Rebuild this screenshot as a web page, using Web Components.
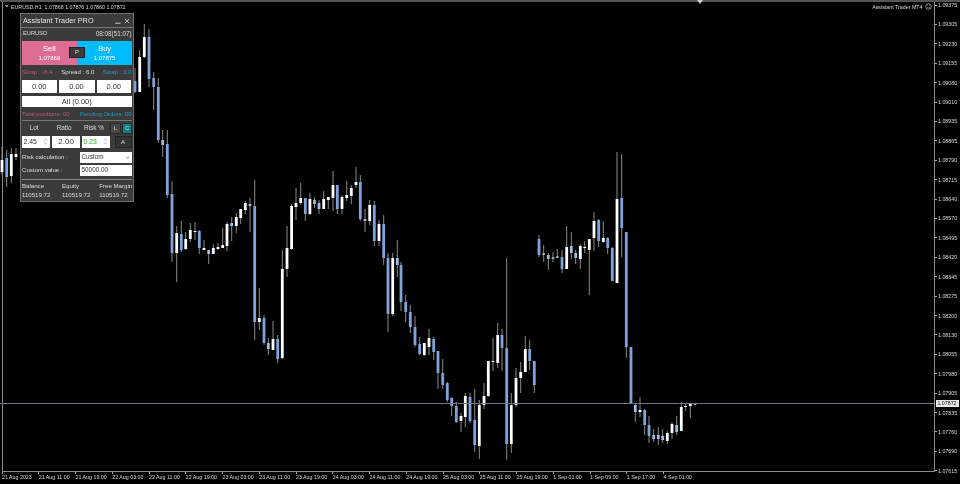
<!DOCTYPE html>
<html>
<head>
<meta charset="utf-8">
<title>Assistant Trader</title>
<style>
  html, body { margin: 0; background: #000; font-family: "Liberation Sans", Arial, sans-serif; }
</style>
</head>
<body>
<chart-view>
  <trader-panel></trader-panel>
</chart-view>

<script>
// x, wick top, body top, body bottom, wick bottom, w = up / b = down (page pixels)
const candles = [
  [2,147,160,172,175,'w'],[6.7,150,158,177,187,'b'],[11.3,148,154,176,183,'w'],[16,148,154,157,160,'w'],
  [135,68,81,92,93,'b'],[139.7,50,57,92,92,'w'],[144.3,24,37,57,58,'w'],[149,29,37,79,87,'b'],
  [153.7,72,78,87,110,'b'],[158.3,78,87,140,143,'b'],[162.7,130,140,145,157,'b'],[167.3,130,144,195,198,'b'],
  [172,181,194,253,262,'b'],[176.7,226,233,253,282,'w'],[181.3,221,234,250,252,'b'],[185.7,232,239,249,250,'w'],
  [190.3,223,230,239,242,'w'],[195,222,231,232,240,'w'],[199.3,230,231,248,254,'b'],[204,240,248,250,250,'w'],
  [208.7,250,250,254,264,'b'],[213.3,244,248,254,254,'w'],[218,243,247,249,250,'w'],[222.7,228,245,248,248,'w'],
  [227,222,224,246,251,'w'],[231.7,217,223,226,241,'b'],[236.3,213,217,226,233,'w'],[240.7,209,209,218,224,'w'],
  [245.3,201,203,210,214,'w'],[250,198,204,206,232,'b'],[254.7,180,206,322,340,'b'],[259.3,288,318,322,330,'w'],
  [264,315,318,343,345,'b'],[268.3,338,343,349,355,'b'],[273,321,339,350,350,'w'],[277.7,335,339,359,363,'b'],
  [282.3,250,269,358,359,'w'],[287,226,248,269,277,'w'],[291.6,204,206,249,250,'w'],[296,188,203,207,220,'w'],
  [300.7,183,198,203,205,'w'],[305.3,198,198,214,221,'b'],[309.9,193,199,214,215,'w'],[314.5,197,200,204,208,'b'],
  [319,200,203,209,214,'b'],[323.7,191,199,209,209,'w'],[328.3,197,197,200,209,'w'],[333,171,185,198,211,'w'],
  [337.3,185,185,209,214,'b'],[342,195,197,209,214,'w'],[346.7,181,195,198,201,'w'],[351.3,185,188,196,204,'w'],
  [356,167,182,185,188,'w'],[360.3,175,182,219,221,'b'],[365,209,219,221,232,'b'],[369.7,200,205,221,225,'w'],
  [374.3,201,205,241,246,'b'],[379,220,224,241,246,'w'],[383.7,215,224,258,265,'b'],[388,253,258,314,332,'b'],
  [392.7,253,258,314,316,'w'],[397.3,240,258,265,277,'b'],[401,262,265,302,311,'b'],[405.7,295,302,312,322,'b'],
  [410.3,305,312,327,333,'b'],[415,316,327,345,347,'b'],[419.7,337,344,354,355,'b'],[424.3,343,343,355,356,'w'],
  [429,329,338,347,355,'w'],[433.7,337,339,352,360,'b'],[438,351,351,373,389,'b'],[442.7,359,373,385,389,'b'],
  [447.3,382,383,400,402,'b'],[451.7,397,398,406,416,'b'],[456.3,402,406,422,423,'b'],[461,413,416,421,432,'w'],
  [465.3,393,396,417,427,'w'],[470,393,397,421,423,'b'],[474.7,389,420,445,452,'b'],[479.3,400,405,446,459,'w'],
  [484,383,396,405,409,'w'],[488.3,361,361,396,397,'w'],[493,338,361,362,371,'w'],[497.7,323,335,363,368,'w'],
  [502,329,335,348,371,'b'],[506.7,258,348,444,460,'b'],[511.3,393,405,444,453,'w'],[516,368,378,405,407,'w'],
  [520.7,362,372,378,393,'w'],[525.3,336,349,372,372,'w'],[529.7,340,349,361,370,'b'],[534.3,361,361,385,393,'b'],
  [539,235,239,255,257,'b'],[543.7,245,253.5,254.5,262,'w'],[548.3,253,255,259,270,'b'],[553,252,257.5,258.5,262,'w'],
  [557.3,249,256.5,257.5,258,'w'],[562,250,257,269,273,'b'],[566.7,226,247,269,269,'w'],[571.3,232,246,253,259,'b'],
  [575.7,250,253,258,264,'b'],[580.3,244,246,259,269,'w'],[584.7,241,247,248,253,'w'],[589.3,239,239,250,295,'w'],
  [594,212,221,238,251,'w'],[598.7,219,220,241,247,'b'],[603.3,221,238,242,243,'w'],[607.7,237,238,248,254,'b'],
  [612.3,247,248,281,281,'b'],[617,152,199,283,283,'w'],[621.7,154,198,228,257,'b'],[626.3,232,232,347,358,'b'],
  [631,347,347,404,404,'b'],[635.3,404,405,412,422,'b'],[640,397,410,412,417,'w'],[644.7,409,410,425,435,'b'],
  [649,416,425,436,443,'b'],[653.7,429,435,439,442,'b'],[658.3,427,435,439,445,'b'],[662.7,429,436,440,443,'b'],
  [667.3,431,433,441,444,'w'],[672,422,424,433,439,'w'],[676.7,416,425,432,435,'b'],[681.3,402,407,431,431,'w'],
  [685.7,403,406,407,411,'w'],[690.3,404,404,406,418,'w'],[695,403,403,404.5,405,'w']
]

const priceLabels = ['1.09375', '1.09305', '1.09230', '1.09155', '1.09080', '1.09010', '1.08935', '1.08865',
  '1.08790', '1.08715', '1.08640', '1.08570', '1.08495', '1.08420', '1.08345', '1.08275', '1.08200', '1.08130',
  '1.08055', '1.07980', '1.07905', '1.07835', '1.07760', '1.07690', '1.07615']

const timeLabels = ['21 Aug 2023', '21 Aug 11:00', '21 Aug 19:00', '22 Aug 03:00', '22 Aug 11:00', '22 Aug 19:00',
  '23 Aug 03:00', '23 Aug 11:00', '23 Aug 19:00', '24 Aug 03:00', '24 Aug 11:00', '24 Aug 19:00', '25 Aug 03:00',
  '25 Aug 11:00', '25 Aug 19:00', '1 Sep 01:00', '1 Sep 09:00', '1 Sep 17:00', '4 Sep 01:00']

const candleMarkup = candles.map(([x, wt, bt, bb, wb, kind]) => {
  const fill = kind === 'w' ? '#fff' : (bb - bt < 8 ? '#a0bbe6' : '#7fa3dc')
  return `<path d="M${x} ${wt}V${wb}" stroke="#8a8a8a" stroke-width="1"/>` +
    `<rect x="${x - 1.4}" y="${bt}" width="2.8" height="${Math.max(bb - bt, 1)}" fill="${fill}"/>`
}).join('')

const chartTemplate = document.createElement('template')
chartTemplate.innerHTML = `
  <style>
    :host {
      display: grid;
      position: relative;
      width: 960px;
      height: 484px;
      overflow: hidden;
      background: #000;
      color: #d8d8d8;
      font: 5.3px/6px "Liberation Sans", Arial, sans-serif;
      grid-template-columns: 935px 25px;
      grid-template-rows: 2px 470px 12px;
      filter: blur(.3px);
    }
    .top { grid-column: 1 / 3; grid-row: 1; background: #555; position: relative; }
    .top svg { position: absolute; left: 697px; top: 0; }
    .plot {
      grid-column: 1;
      grid-row: 2;
      position: relative;
      margin-left: 1.5px;
      border-left: 1px solid #8c8c8c;
      border-right: 1px solid #8c8c8c;
      border-bottom: 1px solid #8c8c8c;
    }
    .plot > svg { position: absolute; left: -2.5px; top: 0; }
    .head {
      position: absolute;
      inset: 0 0 auto 0;
      padding: 1px 2.5px 0 2px;
      display: flex;
      align-items: center;
      justify-content: space-between;
    }
    .head > span { display: flex; align-items: center; gap: 2px; }
    .head > span:first-child { gap: 3px; }
    .head .name { white-space: pre; }
    .prices {
      grid-column: 2;
      grid-row: 2 / 4;
      height: 472px;
      display: flex;
      flex-direction: column;
      justify-content: space-between;
      position: relative;
    }
    .prices div { display: flex; align-items: center; gap: 1px; height: 6px; }
    .prices i { width: 2px; height: 1px; background: #aaa; }
    .prices .tag {
      position: absolute;
      left: 0.5px;
      top: 398px;
      width: 23px;
      height: 6.5px;
      line-height: 6.5px;
      background: #e8e8e8;
      color: #111;
      justify-content: center;
    }
    .times { grid-column: 1; grid-row: 3; display: flex; padding-left: 1.5px; }
    .times div {
      flex: 0 0 36.75px;
      height: 12px;
      line-height: 11px;
      padding-left: .5px;
      box-sizing: border-box;
      white-space: nowrap;
      position: relative;
    }
    .times i { position: absolute; left: 0; top: 0; width: 1px; height: 2px; background: #aaa; }
    .bid { position: absolute; left: -2.5px; right: 0; top: 401px; height: 1px; background: #6f7480; }
  </style>
  <div class="top"><svg width="6" height="4" viewBox="0 0 6 4"><path d="M0 0H6L3 4Z" fill="#c8c8c8"/></svg></div>
  <div class="plot">
    <svg width="934" height="470" viewBox="0 2 934 470">${candleMarkup}</svg>
    <div class="bid"></div>
    <div class="head">
      <span><svg width="3.5" height="2.5" viewBox="0 0 5 3"><path d="M0 0H5L2.5 3Z" fill="#ddd"/></svg><span class="name">EURUSD,H1  1.07868 1.07876 1.07860 1.07872</span></span>
      <span>Assistant Trader MT4<svg width="7" height="7" viewBox="0 0 7 7"><circle cx="3.5" cy="3.5" r="2.8" fill="none" stroke="#aaa" stroke-width=".8"/><path d="M2 4.4Q3.5 5.6 5 4.4M2.5 2.2V3M4.5 2.2V3" fill="none" stroke="#aaa" stroke-width=".6"/></svg></span>
    </div>
    <slot></slot>
  </div>
  <div class="prices">
    ${priceLabels.map(p => `<div><i></i><span>${p}</span></div>`).join('')}
    <div class="tag">1.07872</div>
  </div>
  <div class="times">
    ${timeLabels.map(t => `<div><i></i>${t}</div>`).join('')}
  </div>
`

class ChartView extends HTMLElement {
  constructor () {
    super()
    this.attachShadow({ mode: 'open' })
    this.shadowRoot.appendChild(chartTemplate.content.cloneNode(true))
  }
}

const fieldTemplate = document.createElement('template')
fieldTemplate.innerHTML = `
  <style>
    :host {
      display: flex;
      align-items: center;
      justify-content: center;
      box-sizing: border-box;
      height: 100%;
      background: #fff;
      color: #333;
      font-size: 7.5px;
      position: relative;
    }
    :host([align=left]) { justify-content: flex-start; padding-left: 2px; font-size: 6.4px; }
    :host([spin]) { justify-content: flex-start; padding: 1px 0 0 1.5px; font-size: 6.9px; }
    :host([large]) { font-size: 8px; }
    svg { position: absolute; right: 2px; top: 50%; margin-top: -3.5px; display: none; }
    :host([spin]) .spin, :host([caret]) .caret { display: block; }
  </style>
  <slot></slot>
  <svg class="spin" width="5" height="7" viewBox="0 0 5 7"><path d="M.8 2.6 2.5 1 4.2 2.6M.8 4.4 2.5 6 4.2 4.4" fill="none" stroke="#999" stroke-width=".7"/></svg>
  <svg class="caret" width="5" height="7" viewBox="0 0 5 7"><path d="M.8 2.8 2.5 4.4 4.2 2.8" fill="none" stroke="#888" stroke-width=".9"/></svg>
`

class NumField extends HTMLElement {
  constructor () {
    super()
    this.attachShadow({ mode: 'open' })
    this.shadowRoot.appendChild(fieldTemplate.content.cloneNode(true))
  }
}

const panelTemplate = document.createElement('template')
panelTemplate.innerHTML = `
  <style>
    :host {
      display: block;
      position: absolute;
      left: 17px;
      top: 11px;
      width: 114.5px;
      height: 188.5px;
      box-sizing: border-box;
      background: #3b3b3b;
      border: 1px solid #6e6e6e;
      color: #dcdcdc;
      font: 6.1px/1 "Liberation Sans", Arial, sans-serif;
    }
    .title {
      height: 13px;
      padding: 0 3px 0 2.5px;
      display: flex;
      align-items: center;
      justify-content: space-between;
      font-size: 7.3px;
      color: #e4e4e4;
    }
    .title span { display: flex; gap: 3px; align-items: center; }
    .body { padding: 0 1.5px; display: flex; flex-direction: column; }
    hr { border: 0; height: 1px; margin: 0; background: #777; }
    .info { height: 11.5px; display: flex; align-items: center; justify-content: space-between; padding: 0 0 0 1px; font-size: 6.3px; }
    .info b { font-weight: 400; font-size: 5.7px; }
    .deal { display: grid; grid-template-columns: 1fr 1fr; height: 24.5px; margin-top: 1px; position: relative; color: #fff; }
    .deal div { display: flex; flex-direction: column; align-items: center; justify-content: center; gap: 2.5px; font-size: 7.5px; }
    .deal small { font-size: 6px; }
    .sell { background: #dc6e96; }
    .buy { background: #00bcff; padding-left: 1px; }
    .deal .pend {
      position: absolute;
      left: 47px;
      top: 6.5px;
      width: 16px;
      height: 10.5px;
      padding: 0;
      background: #3a3a3a;
      border: .5px solid #222;
      box-sizing: border-box;
      font-size: 6px;
      color: #ddd;
    }
    .swap { height: 15px; display: flex; align-items: center; justify-content: space-between; font-size: 6.1px; }
    .pink { color: #c05478; }
    .blue { color: #1c9cc8; }
    .amounts { display: grid; grid-template-columns: 34.5px 36px 34.5px; gap: 2px; height: 13px; }
    .all { height: 11px; margin-top: 3px; }
    .totals {
      height: 12.5px;
      box-sizing: border-box;
      padding-bottom: 1.5px;
      display: flex;
      align-items: flex-end;
      justify-content: space-between;
      font-size: 5.95px;
    }
    .sep { height: 1.5px; background: #777; }
    .labels { display: grid; grid-template-columns: 28.3px 1.7px 28.3px 1.7px 27.9px 1fr; height: 15px; align-items: center; text-align: center; font-size: 6.4px; }
    .labels span { padding-right: 4px; }
    .keys { grid-column: 6; display: flex; justify-content: flex-end; gap: 1.5px; margin-top: 0; }
    .key {
      width: 11px;
      height: 10.5px;
      display: flex;
      align-items: center;
      justify-content: center;
      box-sizing: border-box;
      background: #474747;
      border: .5px solid #2b2b2b;
      font-size: 5.6px;
    }
    .key.on { background: #0d7f86; color: #b4e2e2; width: 10px; }
    .inputs { display: grid; grid-template-columns: 28.3px 28.3px 27.9px 1fr; gap: 1.7px; height: 11.5px; }
    .inputs .a {
      margin-left: 3px;
      background: #333;
      border: .5px solid #252525;
      box-sizing: border-box;
      display: flex;
      align-items: center;
      justify-content: center;
      font-size: 6px;
    }
    .green { color: #35a835; }
    .form { display: grid; grid-template-columns: 1fr 52px; row-gap: 2px; margin-top: 4px; grid-auto-rows: 11px; align-items: center; }
    .form num-field { grid-column: 2; }
    .sep2 { margin-top: 3px; height: 1px; background: #888; }
    .stats { display: grid; grid-template-columns: 40px 37.3px 1fr; padding-top: 3px; row-gap: 3.5px; white-space: nowrap; }
  </style>
  <div class="title">
    Assistant Trader PRO
    <span>
      <svg width="6" height="6" viewBox="0 0 6 6"><path d="M0 5.2H5.6" stroke="#c8c8c8" stroke-width="1"/></svg>
      <svg width="6" height="6" viewBox="0 0 6 6"><path d="M.8 .8 5.2 5.2M5.2 .8 .8 5.2" stroke="#d8d8d8" stroke-width=".8"/></svg>
    </span>
  </div>
  <hr>
  <div class="body">
    <div class="info"><b>EURUSD</b><span>08:08(51:07)</span></div>
    <div class="deal">
      <div class="sell">Sell<small>1.07869</small></div>
      <div class="buy">Buy<small>1.07875</small></div>
      <div class="pend">P</div>
    </div>
    <div class="swap"><span class="pink">Swap : -6.4</span><span>Spread : 6.0</span><span class="blue">Swap : 3.0</span></div>
    <div class="amounts">
      <num-field>0.00</num-field><num-field>0.00</num-field><num-field>0.00</num-field>
    </div>
    <div class="all"><num-field>All (0.00)</num-field></div>
    <div class="totals"><span class="pink">Total positions: 00</span><span class="blue">Pending Orders: 00</span></div>
    <div class="sep"></div>
    <div class="labels">
      <span>Lot</span><i></i><span>Ratio</span><i></i><span>Risk %</span>
      <div class="keys"><div class="key">L</div><div class="key on">C</div></div>
    </div>
    <div class="inputs">
      <num-field spin>2.45</num-field>
      <num-field large>2.00</num-field>
      <num-field spin><span class="green">0.23</span></num-field>
      <div class="a">A</div>
    </div>
    <div class="form">
      <span>Risk calculation :</span><num-field align="left" caret>Custom</num-field>
      <span>Custom value :</span><num-field align="left">50000.00</num-field>
    </div>
    <div class="sep2"></div>
    <div class="stats">
      <span>Balance</span><span>Equity</span><span>Free Margin</span>
      <span>110519.72</span><span>110519.72</span><span>110519.72</span>
    </div>
  </div>
`

class TraderPanel extends HTMLElement {
  constructor () {
    super()
    this.attachShadow({ mode: 'open' })
    this.shadowRoot.appendChild(panelTemplate.content.cloneNode(true))
  }
}

window.customElements.define('num-field', NumField)
window.customElements.define('trader-panel', TraderPanel)
window.customElements.define('chart-view', ChartView)
</script>
</body>
</html>
